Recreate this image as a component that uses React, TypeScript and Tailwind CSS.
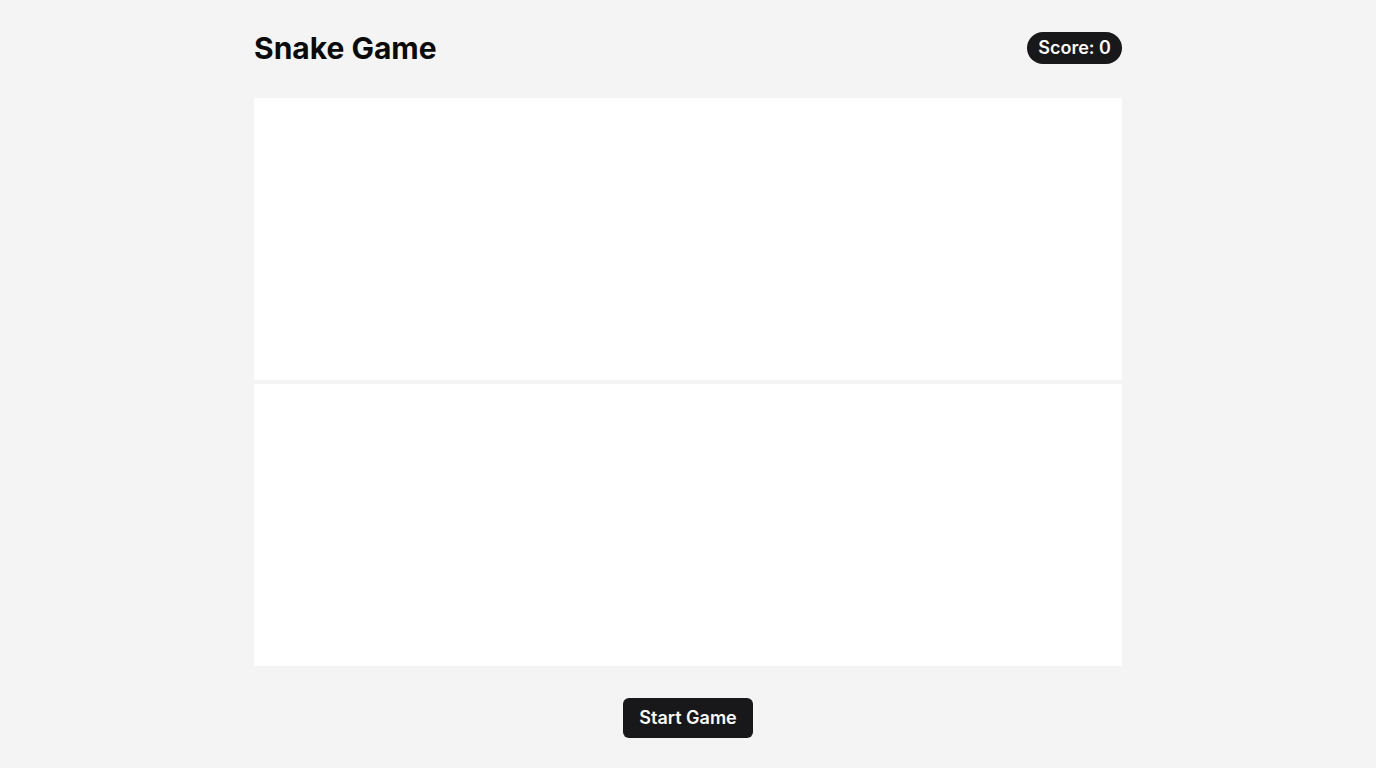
const App = () => {
  return (
    <div className="min-h-screen bg-[#f4f4f4] font-['Inter',sans-serif] text-[#0a0a0a]">
      <div className="mx-auto w-[868px] pt-[30px] pb-[30px]">
        <div className="flex items-center justify-between h-9 mb-8">
          <h1 className="text-3xl font-bold leading-9">Snake Game</h1>
          <div className="h-8 px-[11px] flex items-center rounded-full bg-[#18181b] text-[#fafafa] text-lg font-semibold">
            Score: 0
          </div>
        </div>

        <div className="flex flex-col gap-1">
          <div className="h-[282px] bg-white" />
          <div className="h-[282px] bg-white" />
        </div>

        <div className="flex justify-center mt-8">
          <button className="h-10 px-4 rounded-md bg-[#18181b] text-[#fafafa] text-lg font-semibold">
            Start Game
          </button>
        </div>
      </div>
    </div>
  );
};

export default App;
